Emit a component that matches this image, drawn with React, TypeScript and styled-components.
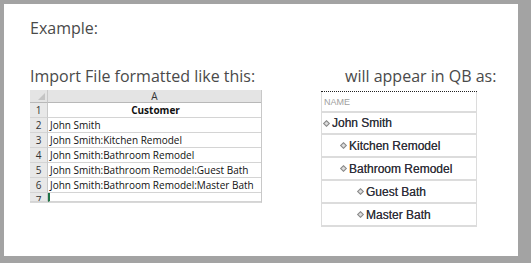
import React from 'react'
import styled, { createGlobalStyle } from 'styled-components'

const GlobalStyle = createGlobalStyle`
  html, body {
    margin: 0;
    padding: 0;
    background: #a3a3a3;
  }
`

const Frame = styled.div`
  width: 514px;
  height: 252px;
  margin: 4px 0 0 4px;
  background: #fff;
  box-sizing: border-box;
  padding: 13px 0 0 26px;
  font-family: "Open Sans", sans-serif;
  color: #4a4a4a;
`

const Title = styled.div`
  font-size: 16px;
  line-height: 22px;
`

const Columns = styled.div`
  display: flex;
  margin-top: 26px;
`

const LeftCol = styled.div`
  width: 290px;
  display: flex;
  flex-direction: column;
`

const RightCol = styled.div`
  width: 180px;
  display: flex;
  flex-direction: column;
  align-items: flex-start;
`

const Caption = styled.div<{ $indent?: number }>`
  font-size: 16px;
  line-height: 22px;
  padding-left: ${p => p.$indent || 0}px;
  white-space: nowrap;
`

const Sheet = styled.div`
  margin-top: 3px;
  width: 231px;
  display: grid;
  grid-template-columns: 18px 1fr;
  grid-template-rows: 13px repeat(6, 15px) 9px;
  font-family: "Open Sans", sans-serif;
  font-size: 10px;
  color: #111;
  border-right: 1px solid #c8c8c8;
  border-bottom: 1px solid #d8d8d8;
  overflow: hidden;
`

const Corner = styled.div`
  background: #e4e4e4;
  border-right: 1px solid #c8c8c8;
  border-bottom: 1px solid #b8b8b8;
  position: relative;
  &::after {
    content: '';
    position: absolute;
    right: 2px;
    bottom: 2px;
    border-left: 7px solid transparent;
    border-bottom: 7px solid #c4c4c4;
  }
`

const ColHead = styled.div`
  background: #e4e4e4;
  border-bottom: 1px solid #b8b8b8;
  text-align: center;
  line-height: 12px;
  color: #333;
`

const RowNum = styled.div`
  background: #e8e8e8;
  border-right: 1px solid #c8c8c8;
  border-bottom: 1px solid #d4d4d4;
  text-align: center;
  line-height: 14px;
  color: #333;
  overflow: hidden;
`

const Cell = styled.div<{ $bold?: boolean; $active?: boolean }>`
  border-bottom: 1px solid #d4d4d4;
  line-height: 14px;
  padding-left: 2px;
  white-space: nowrap;
  font-weight: ${p => (p.$bold ? 700 : 400)};
  text-align: ${p => (p.$bold ? 'center' : 'left')};
  border-left: ${p => (p.$active ? '2px solid #217346' : '0')};
`

const List = styled.div`
  margin-top: 4px;
  margin-left: 1px;
  width: 156px;
  border-top: 1px dotted #222;
  font-family: "Liberation Sans", Arial, sans-serif;
`

const Row = styled.div<{ $level: number }>`
  height: 22px;
  box-sizing: border-box;
  border: 1px solid #dcdcdc;
  border-top: 0;
  border-bottom: 2px solid #dcdcdc;
  display: flex;
  align-items: center;
  padding-left: ${p => 2 + p.$level * 17}px;
  font-size: 12px;
  color: #2e2e3a;
  text-shadow: 0 0 0.4px #555;
  & + & {
    height: 23px;
  }
`

const HeadRow = styled.div`
  height: 21px;
  box-sizing: border-box;
  border: 1px solid #dcdcdc;
  border-top: 0;
  border-bottom: 2px solid #dcdcdc;
  display: flex;
  align-items: center;
  padding-left: 2px;
  font-size: 9px;
  color: #a0a0a0;
`

const Bullet = styled.span`
  display: inline-block;
  width: 3px;
  height: 3px;
  margin-right: 3px;
  border: 1px solid #888;
  background: #ddd;
  transform: rotate(45deg);
`

const sheetRows = [
  'John Smith',
  'John Smith:Kitchen Remodel',
  'John Smith:Bathroom Remodel',
  'John Smith:Bathroom Remodel:Guest Bath',
  'John Smith:Bathroom Remodel:Master Bath',
]

const qbRows: [string, number][] = [
  ['John Smith', 0],
  ['Kitchen Remodel', 1],
  ['Bathroom Remodel', 1],
  ['Guest Bath', 2],
  ['Master Bath', 2],
]

export default function App() {
  return (
    <>
      <GlobalStyle />
      <Frame>
        <Title>Example:</Title>
        <Columns>
          <LeftCol>
            <Caption>Import File formatted like this:</Caption>
            <Sheet>
              <Corner />
              <ColHead>A</ColHead>
              <RowNum>1</RowNum>
              <Cell $bold>Customer</Cell>
              {sheetRows.map((r, i) => (
                <React.Fragment key={i}>
                  <RowNum>{i + 2}</RowNum>
                  <Cell>{r}</Cell>
                </React.Fragment>
              ))}
              <RowNum>7</RowNum>
              <Cell $active />
            </Sheet>
          </LeftCol>
          <RightCol>
            <Caption $indent={25}>will appear in QB as:</Caption>
            <List>
              <HeadRow>NAME</HeadRow>
              {qbRows.map(([name, level]) => (
                <Row key={name} $level={level}>
                  <Bullet />
                  {name}
                </Row>
              ))}
            </List>
          </RightCol>
        </Columns>
      </Frame>
    </>
  )
}
